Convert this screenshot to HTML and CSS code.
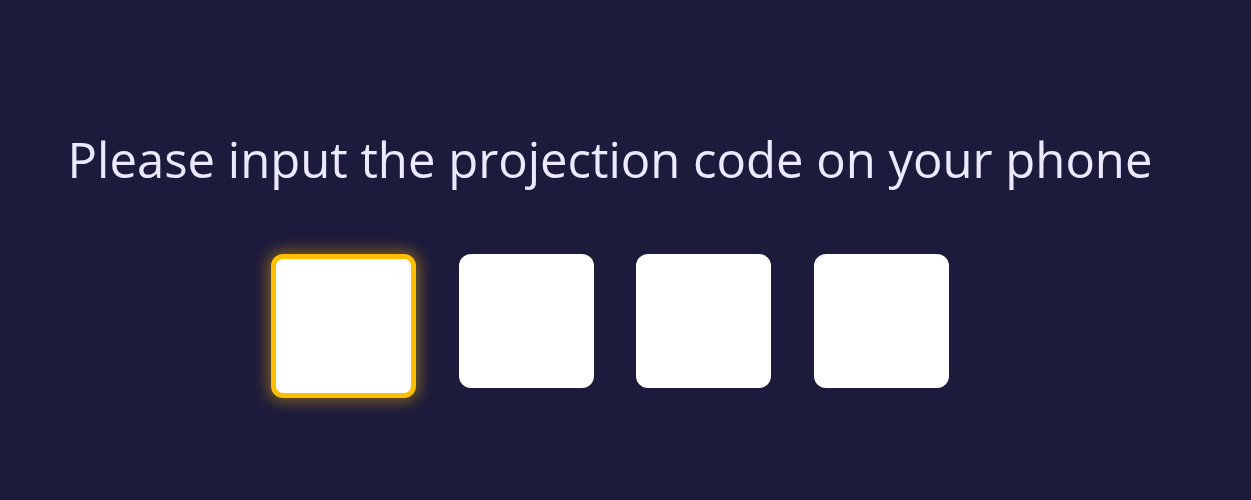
FILE: index.html
```html
<!DOCTYPE html>
<html>
<head>
<meta charset="utf-8">
<link rel="stylesheet" href="styles.css">
</head>
<body>
<main class="screen">
  <h1 class="title">Please input the projection code on your phone</h1>
  <div class="code">
    <div class="cell cell-active"></div>
    <div class="cell"></div>
    <div class="cell"></div>
    <div class="cell"></div>
  </div>
</main>
</body>
</html>
```

FILE: styles.css
```css
html, body {
  margin: 0;
  height: 100%;
  background: #1d1b3b;
}
.screen {
  width: 1220px;
  height: 500px;
  box-sizing: border-box;
  padding-top: 126px;
  display: flex;
  flex-direction: column;
  align-items: center;
}
.title {
  margin: 0;
  font-family: "Open Sans", "Noto Sans", sans-serif;
  font-weight: 400;
  font-size: 49px;
  line-height: 66px;
  color: #ebe9ff;
}
.code {
  margin-top: 62px;
  display: flex;
  align-items: flex-start;
  gap: 42.5px;
}
.cell {
  width: 135px;
  height: 134px;
  background: #ffffff;
  border-radius: 12px;
}
.cell-active {
  border: 5px solid #ffbf00;
  box-shadow: 0 0 14px 4px rgba(255, 191, 0, 0.38);
}
```
